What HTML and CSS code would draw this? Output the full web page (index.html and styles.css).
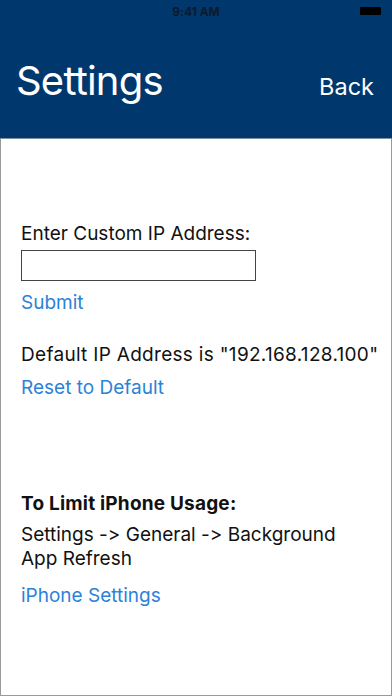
FILE: index.html
```html
<!DOCTYPE html>
<html>
<head>
<meta charset="utf-8">
<link rel="stylesheet" href="styles.css">
</head>
<body>
<div class="screen">
  <header class="header">
    <div class="status">
      <span class="time">9:41 AM</span>
      <span class="battery"></span>
    </div>
    <div class="nav">
      <h1 class="title">Settings</h1>
      <span class="back">Back</span>
    </div>
  </header>
  <main class="content">
    <p class="label">Enter Custom IP Address:</p>
    <div class="input"></div>
    <a class="link submit">Submit</a>
    <p class="label default">Default IP Address is "192.168.128.100"</p>
    <a class="link reset">Reset to Default</a>
    <p class="heading">To Limit iPhone Usage:</p>
    <p class="path">Settings -&gt; General -&gt; Background App Refresh</p>
    <a class="link iphone">iPhone Settings</a>
  </main>
</div>
</body>
</html>
```
FILE: styles.css
```css
html, body {
  margin: 0;
  padding: 0;
  background: #fff;
}
.screen {
  width: 392px;
  height: 696px;
  display: flex;
  flex-direction: column;
  font-family: Inter, "Liberation Sans", sans-serif;
  font-feature-settings: "calt" 0, "liga" 0;
  color: #111;
}
.header {
  background: #00386e;
  height: 138px;
  border-bottom: 1px solid #7890a8;
  display: flex;
  flex-direction: column;
  color: #fff;
}
.status {
  height: 22px;
  display: flex;
  justify-content: center;
  align-items: center;
  position: relative;
}
.time {
  font-size: 12px;
  font-weight: 700;
  color: #0d1a2a;
  margin-top: 1px;
}
.battery {
  position: absolute;
  right: 11px;
  top: 7px;
  width: 21px;
  height: 8px;
  background: #000;
  border-radius: 1px;
}
.nav {
  display: flex;
  justify-content: space-between;
  align-items: baseline;
  padding: 0 18px 0 16px;
  margin-top: 34px;
}
.title {
  margin: 0;
  font-size: 40px;
  font-weight: 400;
  letter-spacing: -0.8px;
}
.back {
  font-size: 23.5px;
}
.content {
  flex: 1;
  border-left: 1px solid #999;
  border-right: 1px solid #999;
  border-bottom: 1px solid #999;
  padding: 0 0 0 20px;
  display: flex;
  flex-direction: column;
  align-items: flex-start;
  font-size: 19px;
  line-height: 22px;
}
.content p {
  margin: 0;
}
.label {
  margin-top: 84px !important;
}
.input {
  width: 233px;
  height: 29px;
  border: 1.5px solid #444;
  margin-top: 5px;
}
.link {
  color: #2b82d9;
  line-height: 22px;
}
.submit {
  margin-top: 11px;
}
.label.default {
  margin-top: 30px !important;
  white-space: nowrap;
  letter-spacing: 0.3px;
}
.reset {
  margin-top: 11px;
}
.heading {
  font-weight: 700;
  margin-top: 94px !important;
  letter-spacing: 0.2px;
}
.path {
  margin-top: 8px !important;
  line-height: 24px;
  width: 340px;
}
.iphone {
  margin-top: 14px;
}
```
